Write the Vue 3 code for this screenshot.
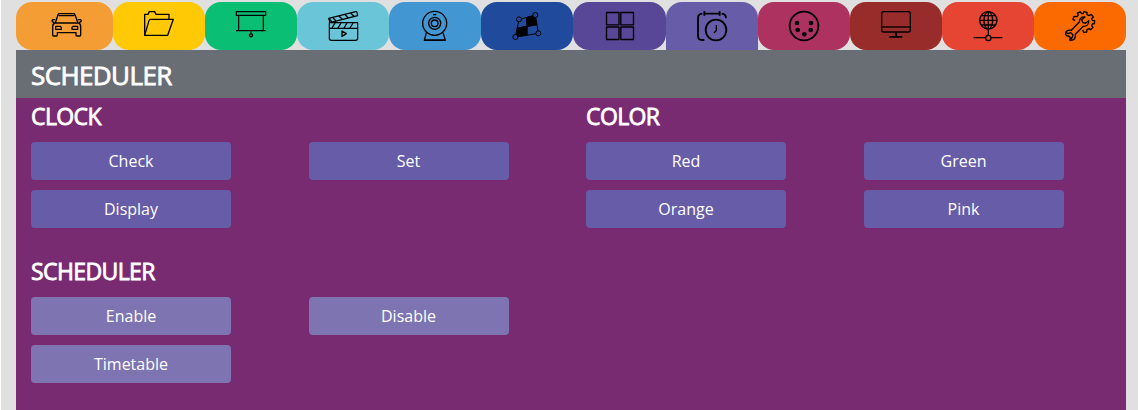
<script setup>
const tabs = [
  { name: 'vehicle', color: '#f49d35', box: '153 30 96 96' },
  { name: 'folder', color: '#ffc905', box: '429 30 96 96' },
  { name: 'screen', color: '#0abf74', box: '105 30 96 96' },
  { name: 'movie', color: '#6bc5d9', box: '381 30 96 96' },
  { name: 'webcam', color: '#4296d2', box: '102 30 96 96' },
  { name: 'mapping', color: '#204a9b', box: '378 30 96 96' },
  { name: 'windows', color: '#584696', box: '102 30 96 96' },
  { name: 'scheduler', color: '#675ca7', box: '378 30 96 96', active: true },
  { name: 'midi', color: '#ae325f', box: '99 30 96 96' },
  { name: 'display', color: '#972c2a', box: '375 30 96 96' },
  { name: 'network', color: '#e64533', box: '102 30 96 96' },
  { name: 'tools', color: '#fa6a00', box: '378 30 96 96' },
]

const groups = [
  { title: 'CLOCK', buttons: ['Check', 'Set', 'Display'] },
  { title: 'COLOR', buttons: ['Red', 'Green', 'Orange', 'Pink'] },
  { title: 'SCHEDULER', light: true, buttons: ['Enable', 'Disable', 'Timetable'] },
]
</script>

<template>
  <div class="page">
    <nav class="tabs">
      <div
        v-for="tab in tabs"
        :key="tab.name"
        class="tab"
        :class="{ active: tab.active }"
        :style="{ background: tab.color }"
      >
        <svg class="icon" :viewBox="tab.box" aria-hidden="true">
          <g v-if="tab.name === 'vehicle'" class="bold">
            <path d="M166 69 L174 44 Q175 41 179 41 H220 Q224 41 225 44 L234 69 Z M176 47 H223" />
            <path d="M166 59 H159 Q155 60 157 65 L163 68 M234 59 H241 Q245 60 243 65 L237 68" />
            <path d="M165 69 Q158 71 158 79 V105 Q158 108 161 108 H169 Q172 108 172 105 V98 H228 V105 Q228 108 231 108 H239 Q242 108 242 105 V79 Q242 71 235 69" />
            <path d="M167 79 H180 L184 82 V88 H167 Z M233 79 H220 L216 82 V88 H233 Z" />
          </g>
          <g v-else-if="tab.name === 'folder'" class="bold">
            <path d="M434 106 V43 H444 L448 35 H464 L468 43 H507 V58" />
            <path d="M434 106 H503 L520 58 H452 Q448 58 447 62 Z" />
          </g>
          <g v-else-if="tab.name === 'screen'">
            <path class="medium" d="M109 35 H197 V46 H109 Z M116 47 V91 M190 47 V91 M108 92 H197 M153 92 V101" />
            <circle class="bold" cx="153" cy="106" r="4.5" />
          </g>
          <g v-else-if="tab.name === 'movie'" class="medium">
            <path d="M386 55 L467 35 Q470 34 471 37 L473 47 L390 68 Z M388 68 H473 V115 Q473 121 467 121 H394 Q388 121 388 115 Z M388 85 H473" />
            <path class="bold" d="M398 52 L408 63 M416 47 L427 58 M434 43 L445 54 M452 39 L463 50 M405 69 L396 84 M423 69 L414 84 M441 69 L432 84 M459 69 L450 84 M388 57 L396 66" />
            <path class="bold" d="M426 93 L439 101 L426 109 Z" />
          </g>
          <g v-else-if="tab.name === 'webcam'" class="bold">
            <circle cx="149" cy="70" r="36" />
            <circle cx="149" cy="70" r="18" />
            <circle cx="149" cy="70" r="10" />
            <path d="M144 44 H154 M124 98 L118 121 H181 L174 98 M119 120 H180" />
          </g>
          <g v-else-if="tab.name === 'mapping'">
            <path class="solid" d="M425 53 L450 45 L455 74 L426 79 Z M398 84 L426 79 V106 L392 110 Z" />
            <path d="M402 59 L451 45 L460 100 L391 111 Z M426 54 V106 M398 84 L456 74" />
            <circle class="hollow" cx="402" cy="58" r="7.5" />
            <circle class="hollow" cx="451" cy="45" r="7.5" />
            <circle class="hollow" cx="460" cy="100" r="7.5" />
            <circle class="hollow" cx="391" cy="111" r="7.5" />
          </g>
          <g v-else-if="tab.name === 'windows'" class="bold">
            <path d="M109.500 37.500 H147 V74.500 H109.500 Z M152.500 37.500 H190.500 V74.500 H152.500 Z M109.500 81 H147 V118.500 H109.500 Z M152.500 81 H190.500 V118.500 H152.500 Z" />
          </g>
          <g v-else-if="tab.name === 'scheduler'" class="heavy">
            <path d="M397 41 Q384 42 384 54 V108 Q384 120 396 120 H403 M403 41 H449 M455 41 Q468 42 468 55 M403 34 V47 M449 34 V47" />
            <circle cx="438" cy="90" r="31" />
            <path class="bold" d="M439 75 V91 L432 99" />
          </g>
          <g v-else-if="tab.name === 'midi'">
            <circle class="heavy" cx="147" cy="78" r="43" />
            <g class="dots">
              <circle cx="126" cy="69" r="7" />
              <circle cx="168" cy="69" r="7" />
              <circle cx="128" cy="90" r="7" />
              <circle cx="167" cy="90" r="7" />
              <circle cx="148" cy="103" r="7" />
            </g>
          </g>
          <g v-else-if="tab.name === 'display'" class="bold">
            <rect x="380" y="35" width="86" height="61" rx="6" />
            <path d="M380 81 H466" />
            <path class="heavy" d="M423 97 V109 M403 110.500 H442" />
          </g>
          <g v-else-if="tab.name === 'network'" class="bold">
            <circle cx="151" cy="61" r="26" />
            <ellipse cx="151" cy="61" rx="13" ry="26" />
            <path d="M151 35 V105 M125 61 H177 M130 47 H172 M130 75 H172 M107 113 H142 M160 113 H193" />
            <circle cx="151" cy="114" r="8" />
          </g>
          <g v-else class="bold">
            <path d="M383 97 Q381 109 392 108 L397 113 L395 120 Q413 124 412 103 L436 79 Q453 79 452 62 L442 70 L434 67 L431 59 L441 51 Q425 49 424 66 L400 91 Q388 89 383 97 L390 101 L398 98 L405 104 L402 113 L396 119" />
            <path d="M411 62 L405 58 L408 49 L416 50 L421 45 L418 39 L427 36 L431 41 H435 L438 35 L447 37 V44 L453 47 L460 43 L466 51 L461 56 L463 61 L470 62 L469 71 L463 72 L461 77 L465 82 L458 89 L453 86 L447 89 L446 96 L437 97 L434 90" />
          </g>
        </svg>
      </div>
    </nav>

    <header class="banner">
      <h1>SCHEDULER</h1>
    </header>

    <main class="panel">
      <section v-for="group in groups" :key="group.title" class="group">
        <h2>{{ group.title }}</h2>
        <div class="buttons">
          <button
            v-for="label in group.buttons"
            :key="label"
            type="button"
            :class="{ light: group.light }"
          >{{ label }}</button>
        </div>
      </section>
    </main>
  </div>
</template>

<style>
body {
  margin: 0;
  background: #fff;
  overflow: hidden;
}
</style>

<style scoped>
.page {
  box-sizing: border-box;
  height: 410px;
  margin-left: 1px;
  padding: 2px 12px 0 15px;
  background: #e0e0e0;
  display: flex;
  flex-direction: column;
  font-family: "Open Sans", "Noto Sans", sans-serif;
  color: #fff;
}
.tabs {
  display: flex;
  height: 48px;
}
.tab {
  flex: 1 1 0;
  display: flex;
  align-items: center;
  justify-content: center;
  border-radius: 16px;
}
.tab:first-child {
  padding-left: 5px;
}
.tab.active {
  border-radius: 16px 16px 0 0;
}
.icon {
  width: 32px;
  height: 32px;
  fill: none;
  stroke: #000;
  stroke-width: 3;
  stroke-linejoin: round;
}
.medium {
  stroke-width: 3.5;
}
.bold {
  stroke-width: 4;
}
.heavy {
  stroke-width: 5.5;
}
.solid,
.dots {
  fill: #000;
}
.dots {
  stroke: none;
}
.hollow {
  fill: #204a9b;
}
.banner {
  height: 48px;
  flex-shrink: 0;
  padding-left: 15px;
  background: #696d74;
}
h1,
h2 {
  margin: 0;
  font-weight: 400;
  -webkit-text-stroke: 0.8px #fff;
}
h1 {
  font-size: 26px;
  line-height: 51px;
  letter-spacing: -0.6px;
}
.panel {
  flex: 1;
  display: grid;
  grid-template-columns: 1fr 1fr;
  grid-auto-rows: 155px;
  align-content: start;
  background: #792b72;
}
.group {
  padding-left: 15px;
}
h2 {
  height: 44px;
  font-size: 23px;
  line-height: 36px;
  letter-spacing: -0.6px;
}
.buttons {
  display: grid;
  grid-template-columns: 200px 200px;
  column-gap: 77.5px;
  row-gap: 10px;
}
button {
  height: 38px;
  padding: 0;
  border: 0;
  border-radius: 4px;
  background: #675ca7;
  color: #fff;
  font: 16px/38px "Open Sans", "Noto Sans", sans-serif;
}
button.light {
  background: #7e74b2;
}
</style>
